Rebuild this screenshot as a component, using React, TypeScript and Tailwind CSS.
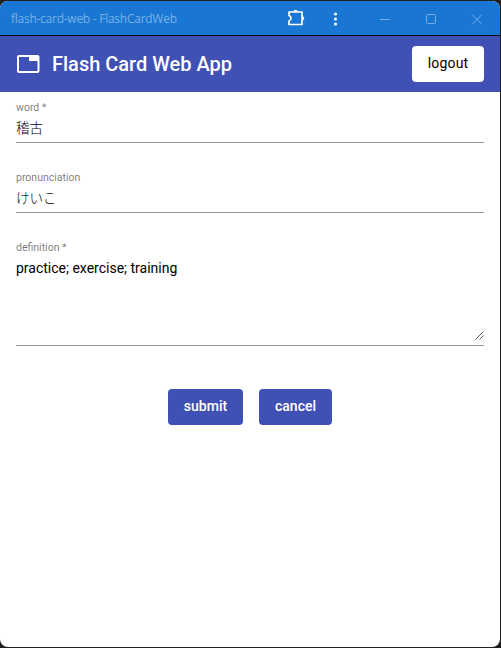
import React from "react";

function TitleBar() {
  return (
    <header className="flex h-[35px] shrink-0 items-center border-b border-black bg-[#1976d2] pl-[11px] text-white">
      <span className="grow whitespace-nowrap pt-px font-['Open_Sans','Noto_Sans',sans-serif] text-xs tracking-[-0.26px] text-[#79b0e5]">
        flash-card-web - FlashCardWeb
      </span>
      <svg className="mr-[19px] h-5 w-5 shrink-0" viewBox="0 0 20 20" fill="none" stroke="currentColor" strokeWidth="1.7" strokeLinejoin="round">
        <path d="M3 4H16V16.500H3V13Q5 12.200 5 10.200T3 7.400Z" />
        <path d="M7.400 3.800a2.100 2.100 0 0 1 4.200 0ZM16.200 8.200a2.100 2.100 0 0 1 0 4.200Z" fill="currentColor" stroke="none" />
      </svg>
      <svg className="mr-[34px] h-5 w-5 shrink-0" viewBox="0 0 20 20" fill="currentColor">
        <circle cx="10.5" cy="6" r="1.6" />
        <circle cx="10.5" cy="11" r="1.6" />
        <circle cx="10.5" cy="16" r="1.6" />
      </svg>
      <svg className="mr-[34px] h-3 w-3 shrink-0" viewBox="0 0 12 12" stroke="#75ade4">
        <path d="M1 7.500H11" />
      </svg>
      <svg className="mr-[34px] mt-px h-3 w-3 shrink-0" viewBox="0 0 12 12" fill="none" stroke="#75ade4">
        <rect x="1.5" y="1.5" width="9" height="9" rx="1" />
      </svg>
      <svg className="mr-[17px] mt-px h-3 w-3 shrink-0" viewBox="0 0 12 12" stroke="#75ade4">
        <path d="M1 1.500L11 11.500M11 1.500L1 11.500" />
      </svg>
    </header>
  );
}

function Toolbar() {
  return (
    <div className="flex h-14 shrink-0 items-center bg-[#3f51b5] px-4 text-white">
      <svg className="mr-3 h-6 w-6" viewBox="0 0 24 24" fill="currentColor">
        <path d="M21.500 3H3c-1.100 0-2 .9-2 2v14c0 1.100.9 2 2 2h18.500c1.100 0 2-.9 2-2V5c0-1.100-.9-2-2-2zm0 16H3V5h10v4h8.500v10z" />
      </svg>
      <h1 className="grow text-xl font-medium">Flash Card Web App</h1>
      <button className="h-9 w-[72px] rounded bg-white pb-0.5 text-sm tracking-[0.2px] text-black">logout</button>
    </div>
  );
}

function Label({ children }: { children: string }) {
  return <label className="h-3 text-[10.5px] leading-3 text-black/54">{children}</label>;
}

function Field({ label, value }: { label: string; value: string }) {
  return (
    <div className="flex h-[41px] flex-col border-b border-[#949494]">
      <Label>{label}</Label>
      <input className="mt-1 h-5 w-full bg-transparent font-[Roboto,'Noto_Sans_CJK_JP',sans-serif] text-[13.5px] font-light text-black outline-none" defaultValue={value} />
    </div>
  );
}

export default function App() {
  return (
    <div className="h-[648px] w-[501px] bg-[#202020] pt-px pr-px pb-px font-[Roboto,'Noto_Sans_CJK_JP',sans-serif]">
      <div className="flex h-full flex-col overflow-hidden rounded-lg bg-white">
        <TitleBar />
        <Toolbar />
        <form className="flex flex-col px-4 pt-2.5">
          <div className="flex flex-col gap-[29px]">
            <Field label="word *" value="稽古" />
            <Field label="pronunciation" value="けいこ" />
            <div className="flex h-[104px] flex-col border-b border-[#949494]">
              <Label>definition *</Label>
              <div className="mt-1 flex h-[82px] justify-between text-sm text-black">
                <p>practice; exercise; training</p>
                <svg className="h-[9px] w-[9px] self-end" viewBox="0 0 9 9" stroke="#555">
                  <path d="M.5 8.500L8.500.5M4.500 8.500L8.500 4.500" />
                </svg>
              </div>
            </div>
          </div>
          <div className="mt-[43px] flex justify-center gap-4 text-sm font-medium text-white">
            <button type="button" className="h-9 w-[75px] rounded bg-[#3f51b5] pb-0.5">submit</button>
            <button type="button" className="h-9 w-[73px] rounded bg-[#3f51b5] pb-0.5">cancel</button>
          </div>
        </form>
      </div>
    </div>
  );
}
